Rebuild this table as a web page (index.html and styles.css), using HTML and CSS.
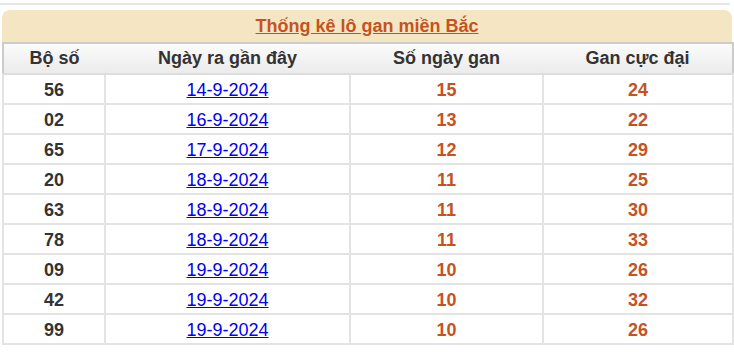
FILE: index.html
```html
<!DOCTYPE html>
<html lang="vi">
<head>
<meta charset="utf-8">
<title>Thống kê lô gan miền Bắc</title>
<link rel="stylesheet" href="styles.css">
</head>
<body>
<div class="topline"></div>
<div class="box">
  <div class="title"><a href="#">Thống kê lô gan miền Bắc</a></div>
  <table class="gan">
    <colgroup>
      <col class="c1"><col class="c2"><col class="c3"><col class="c4">
    </colgroup>
    <thead>
      <tr><th>Bộ số</th><th>Ngày ra gần đây</th><th>Số ngày gan</th><th>Gan cực đại</th></tr>
    </thead>
    <tbody>
      <tr><td class="num">56</td><td><a href="#">14-9-2024</a></td><td class="hl">15</td><td class="hl">24</td></tr>
      <tr><td class="num">02</td><td><a href="#">16-9-2024</a></td><td class="hl">13</td><td class="hl">22</td></tr>
      <tr><td class="num">65</td><td><a href="#">17-9-2024</a></td><td class="hl">12</td><td class="hl">29</td></tr>
      <tr><td class="num">20</td><td><a href="#">18-9-2024</a></td><td class="hl">11</td><td class="hl">25</td></tr>
      <tr><td class="num">63</td><td><a href="#">18-9-2024</a></td><td class="hl">11</td><td class="hl">30</td></tr>
      <tr><td class="num">78</td><td><a href="#">18-9-2024</a></td><td class="hl">11</td><td class="hl">33</td></tr>
      <tr><td class="num">09</td><td><a href="#">19-9-2024</a></td><td class="hl">10</td><td class="hl">26</td></tr>
      <tr><td class="num">42</td><td><a href="#">19-9-2024</a></td><td class="hl">10</td><td class="hl">32</td></tr>
      <tr><td class="num">99</td><td><a href="#">19-9-2024</a></td><td class="hl">10</td><td class="hl">26</td></tr>
    </tbody>
  </table>
</div>
</body>
</html>
```
FILE: styles.css
```css
html, body {
  margin: 0;
  padding: 0;
  background: #fff;
  font-family: "Liberation Sans", Arial, sans-serif;
}
.topline {
  margin-top: 3px;
  width: 730px;
  height: 2px;
  background: #e6e6e6;
}
.box {
  margin: 5px 0 0 2px;
  width: 730px;
}
.title {
  height: 32px;
  line-height: 32px;
  text-align: center;
  background: #f5e6c3;
  border-radius: 8px 8px 0 0;
  font-size: 18px;
  font-weight: bold;
}
.title a {
  color: #c5531f;
  text-decoration: underline;
}
.gan {
  width: 730px;
  border-collapse: collapse;
  table-layout: fixed;
}
.c1 { width: 102px; }
.c2 { width: 245px; }
.c3 { width: 193px; }
.c4 { width: 190px; }
.gan th {
  height: 29px;
  padding: 0;
  font-size: 18px;
  font-weight: bold;
  color: #333;
  background: linear-gradient(#fbfbfb, #ebebeb);
  border-top: 2px solid #cccccc;
  border-bottom: 2px solid #dddddd;
}
.gan th:first-child { border-left: 2px solid #cccccc; }
.gan th:last-child { border-right: 2px solid #cccccc; }
.gan td {
  height: 26px;
  padding: 2px 0 0;
  text-align: center;
  border: 2px solid #e3e3e3;
  font-size: 18px;
}
.gan td.num {
  font-weight: bold;
  color: #333;
}
.gan td.hl {
  font-weight: bold;
  color: #c5531f;
}
.gan td a {
  font-size: 18px;
  color: #0000ee;
  text-decoration: underline;
}
```
